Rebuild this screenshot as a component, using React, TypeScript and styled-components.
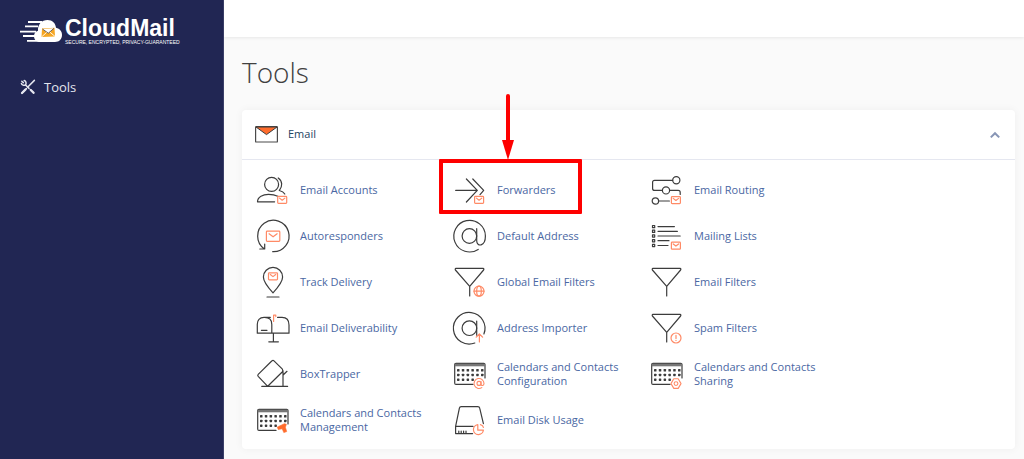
import React from "react";
import styled, { createGlobalStyle } from "styled-components";

const INK = "#3c3c3c";
const ORANGE = "#ff8a66";
const FLAME = "#ff6c2c";
const RED = "#fe0000";

const GlobalStyle = createGlobalStyle`
  * { box-sizing: border-box; }
  body {
    margin: 0;
    background: #fafafa;
    font-family: "Open Sans", "Noto Sans", sans-serif;
    font-size: 11px;
    line-height: 14px;
    color: #24435f;
  }
`;

const Page = styled.div`
  display: flex;
  min-height: 100vh;
`;

const Sidebar = styled.nav`
  flex: 0 0 224px;
  display: flex;
  flex-direction: column;
  gap: 32px;
  padding: 17px 20px;
  background: #212653;
  border-right: 1px solid #3b3f68;
`;

const Brand = styled.a`
  display: flex;
  align-items: center;
  gap: 2px;
  color: #ffffff;
  text-decoration: none;
`;

const BrandText = styled.span`
  display: flex;
  flex-direction: column;
  font-family: "Liberation Sans", Arial, sans-serif;
  white-space: nowrap;
`;

const BrandName = styled.span`
  font-size: 23px;
  line-height: 22px;
  font-weight: 700;
`;

const Tagline = styled.span`
  font-size: 5px;
  line-height: 6px;
`;

const NavLink = styled.a`
  display: flex;
  align-items: center;
  gap: 8px;
  color: #e4e5ee;
  font-size: 13px;
  line-height: 20px;
  font-weight: 500;
  text-decoration: none;
`;

const Main = styled.main`
  flex: 1;
  min-width: 0;
`;

const TopBar = styled.header`
  height: 37px;
  background: #ffffff;
  box-shadow: 0 1px 3px rgba(0, 0, 0, 0.08);
`;

const Content = styled.div`
  padding: 15px 9px 10px 18px;
`;

const Title = styled.h1`
  margin: 0 0 18px;
  font-size: 28px;
  line-height: 40px;
  font-weight: 300;
  color: #404040;
`;

const Card = styled.section`
  background: #ffffff;
  border-radius: 4px;
  box-shadow: 0 0 8px rgba(0, 0, 0, 0.05);
`;

const CardHeader = styled.div`
  display: flex;
  align-items: center;
  gap: 10px;
  height: 50px;
  padding: 0 14px 2px 13px;
  border-bottom: 1px solid #e5e7f0;
`;

const CardTitle = styled.h2`
  flex: 1;
  margin: 0;
  font-size: 11px;
  line-height: 14px;
  font-weight: 400;
`;

const Toggle = styled.button`
  display: flex;
  padding: 2px 0 0;
  border: 0;
  background: none;
`;

const ToolGrid = styled.div`
  display: grid;
  grid-template-columns: repeat(auto-fill, 197px);
  grid-auto-rows: 46px;
  padding: 7px 0 6px;
`;

const ToolLink = styled.a`
  position: relative;
  display: flex;
  align-items: center;
  gap: 11px;
  padding: 0 12px 0 15px;
  color: #4a67a3;
  text-decoration: none;
`;

const Glyph = styled.svg`
  flex: none;
  overflow: visible;
  fill: none;
  stroke: ${INK};
  stroke-width: 1.2;
  stroke-linecap: round;
  stroke-linejoin: round;
`;

const Highlight = styled.span`
  position: absolute;
  inset: -8px 54px -1px 0;
  border: 4px solid ${RED};
  border-radius: 1px;
`;

const Pointer = styled.svg`
  position: absolute;
  left: 63px;
  top: -73px;
`;

type MailProps = { x: number; y: number; w?: number; h?: number };

const Mail = ({ x, y, w = 9, h = 7 }: MailProps) => (
  <g stroke={ORANGE} strokeWidth={1.2}>
    <rect x={x} y={y} width={w} height={h} rx={0.8} />
    <path d={`M${x + w * 0.2} ${y + h * 0.25}L${x + w / 2} ${y + h * 0.55}L${x + w * 0.8} ${y + h * 0.25}`} />
  </g>
);

const Funnel = () => (
  <path d="M2 2.4H29Q30.4 2.6 29.6 4L15.7 20.3L1.4 4Q.8 2.6 2 2.4ZM15.7 20.3V30" />
);

const Calendar = () => (
  <>
    <path d="M19 26.4H2Q.7 26.4 .7 25V6.5Q.7 5.4 2 5.4H29.8Q31 5.4 31 6.5V20" />
    <path d="M.7 7H31" stroke="#777777" strokeWidth={2.6} strokeLinecap="butt" />
    <g fill={INK} stroke="none">
      {[11, 15.7, 20.4].map((y, row) =>
        [3, 7.8, 12.6, 17.4, 22.2, 27].map((x, col) =>
          row === 2 && col > 3 ? null : <rect key={`${x}-${y}`} x={x} y={y} width={2.5} height={2.5} rx={0.6} />
        )
      )}
    </g>
  </>
);

const icons: Record<string, React.ReactNode> = {
  accounts: (
    <>
      <circle cx={14.6} cy={10.4} r={7} />
      <path d="M17.6 27.8H.5C.6 22.6 6 20.4 11.5 20.4Q17 20.4 20.8 22.2M21.2 4C25.6 7 25.7 12.5 22.3 16.5C25 17.2 26.7 18.2 27.8 20" />
      <Mail x={20.7} y={22.4} />
    </>
  ),
  auto: (
    <>
      <path d="M15.7 31.7A15.7 15.7 0 1 0 7.4 28.9M2.8 29H7.7V24" />
      <Mail x={9.4} y={11.2} w={13.4} h={10.2} />
    </>
  ),
  track: (
    <>
      <path d="M16 26.8Q6.4 16.5 6.4 11A9.6 9.6 0 0 1 25.6 11Q25.6 16.5 16 26.8ZM10 31H22" />
      <Mail x={11.5} y={6.8} />
    </>
  ),
  mailbox: (
    <>
      <path d="M13.3 5.4H7C2.5 5.4 .3 8.2 .3 12.3V21.2H32V13C32 8 29.5 5.4 25 5.4H20.6M7.6 5.4C12.2 5.4 14.8 8 14.8 12.4V21.2M4.4 18.3H10M16.4 21.2V29.8M11.8 29.8H21.4" />
      <path d="M16.6 9.4V3.2H18.8V4.6" stroke={ORANGE} />
    </>
  ),
  box: (
    <path d="M15 2.8Q16 1.8 17 2.8L25.4 11.2Q26.3 12.8 25.2 14L10.7 28.3L1.2 18.4Q.3 17.4 1.2 16.4ZM4.8 28.4H30.6M26 12.5V28.4M26.4 16.8L30 13.3" />
  ),
  calManage: (
    <>
      <Calendar />
      <path d="M21.6 22.4L27.4 19.7L29.4 20.3L28.4 23.3L29.7 27.6L26.8 28.6L25.2 24.8L21.2 25.5L20.4 23.3Z" fill={FLAME} stroke={FLAME} strokeWidth={0.6} />
    </>
  ),
  forward: (
    <>
      <path d="M1.7 16.4H23.3M12.4 5L23.3 16.4L12.4 28M18.8 5L29.7 16.4L26 20.6" />
      <Mail x={20.6} y={22.4} />
    </>
  ),
  at: (
    <>
      <circle cx={15.4} cy={16} r={7.3} />
      <path d="M22.7 8.7V20.8C22.7 27 31.4 27 31.4 16A15.8 15.8 0 1 0 24.2 29.4" />
    </>
  ),
  atImport: (
    <>
      <circle cx={15.4} cy={16.2} r={7.3} />
      <path d="M22.7 9V23.2M29.9 22A15.8 15.8 0 1 0 20.8 31" />
      <path d="M25.4 30V22.2M22.2 25.2L25.4 22L28.6 25.2" stroke={ORANGE} />
    </>
  ),
  globalFilter: (
    <>
      <Funnel />
      <g stroke={ORANGE}>
        <circle cx={25} cy={25.2} r={5} />
        <ellipse cx={25} cy={25.2} rx={2.3} ry={5} />
        <path d="M20 25.2H30" />
      </g>
    </>
  ),
  filter: <Funnel />,
  spam: (
    <>
      <Funnel />
      <g stroke={ORANGE}>
        <circle cx={25} cy={26} r={5} />
        <path d="M25 23.4V26.4M25 28.3V28.5" />
      </g>
    </>
  ),
  calConfig: (
    <>
      <Calendar />
      <g stroke={ORANGE} strokeWidth={1.1}>
        <circle cx={25} cy={25.4} r={2} />
        <path d="M27 23.4V26.4C27.2 28.3 30 27.6 30 25.4A5 5 0 1 0 27.8 29.6" />
      </g>
    </>
  ),
  calShare: (
    <>
      <Calendar />
      <g stroke={ORANGE} strokeWidth={1.1}>
        <path d="M22.8 20.8H27.2L30 25.6L27.2 30.4H22.8L20 25.6Z" />
        <circle cx={25} cy={25.6} r={1.9} />
      </g>
    </>
  ),
  disk: (
    <>
      <path d="M18.6 29.6H1.6V22.4L5.4 4.2Q5.7 2.6 7.2 2.6H23.8Q25.4 2.6 25.7 4.2L29.4 19.6M1.6 22.4H19" />
      <path d="M4.8 27V29M7.2 27V29M9.6 27V29M12 27V29" />
      <path d="M23.8 20.6A5 5 0 1 0 29.4 26.2H23.8ZM26.4 20.6Q29 21.2 29.4 23.4" stroke={ORANGE} />
    </>
  ),
  routing: (
    <>
      <circle cx={25.3} cy={6.3} r={3.6} />
      <circle cx={15} cy={16.4} r={3.6} />
      <circle cx={4.4} cy={27} r={3.2} />
      <path d="M21.7 6.3H3.6Q1.6 6.3 1.6 8.3V14.4Q1.6 16.4 3.6 16.4H11.4M18.6 16.4H27.2Q29.2 16.4 29.2 18.4V20.4M7.6 27H18.4" />
      <Mail x={20.4} y={22.6} />
    </>
  ),
  lists: (
    <>
      {[6.6, 11.3, 16, 20.7, 25.5].map((y, i) => (
        <g key={y}>
          <rect x={1.5} y={y - 1.1} width={2.2} height={2.2} />
          <path d={`M7 ${y}H${[23.4, 26.4, 29.2, 18, 17][i]}`} />
        </g>
      ))}
      <Mail x={20.4} y={22.2} />
    </>
  ),
};

type Tool = { label: string; icon: string; highlighted?: boolean };

const tools: Tool[] = [
  { label: "Email Accounts", icon: "accounts" },
  { label: "Forwarders", icon: "forward", highlighted: true },
  { label: "Email Routing", icon: "routing" },
  { label: "Autoresponders", icon: "auto" },
  { label: "Default Address", icon: "at" },
  { label: "Mailing Lists", icon: "lists" },
  { label: "Track Delivery", icon: "track" },
  { label: "Global Email Filters", icon: "globalFilter" },
  { label: "Email Filters", icon: "filter" },
  { label: "Email Deliverability", icon: "mailbox" },
  { label: "Address Importer", icon: "atImport" },
  { label: "Spam Filters", icon: "spam" },
  { label: "BoxTrapper", icon: "box" },
  { label: "Calendars and Contacts Configuration", icon: "calConfig" },
  { label: "Calendars and Contacts Sharing", icon: "calShare" },
  { label: "Calendars and Contacts Management", icon: "calManage" },
  { label: "Email Disk Usage", icon: "disk" },
];

const CloudLogo = () => (
  <svg width="43" height="24" viewBox="0 0 43 24" aria-hidden="true">
    <g stroke="#ffffff" strokeWidth="1.8">
      <path d="M8 3H22M5 7.4H18M0 12.6H16M3 17H16M7 21.8H20" />
    </g>
    <path d="M20.5 23C15.8 23 14 20 14 17.2C14 14.4 15.6 12.3 18 11.8C17.6 5.6 21.6 1 27.5 1C32.4 1 35.6 4.3 36 8.8C40 9.6 42 12.6 42 16C42 20.2 39.2 23 35 23Z" fill="#ffffff" />
    <path d="M22 9.5L34.5 8.8L35 17.4L21.5 18Z" fill="#f5a623" />
    <path d="M22.5 10L28.3 14.2L34 9.3" fill="#ffffff" stroke="#454658" strokeWidth=".8" />
    <path d="M21.5 18L26.6 13.4M35 17.4L30 13.2" stroke="#ffffff" strokeWidth=".9" />
  </svg>
);

const WrenchIcon = () => (
  <svg width="16" height="16" viewBox="0 0 16 16" fill="none" stroke="#e4e5ee" strokeWidth="1.5" strokeLinecap="round" aria-hidden="true">
    <path d="M5.6 6L9 9.4M10.4 10.8L13.6 14" />
    <path d="M4.2 1.6C6 2 6.6 4.2 5.6 5.8C4 6.8 1.8 6.2 1.4 4.4M3.4 3.6L1.8 2.2" />
    <path d="M14.4 1.4L7.8 8M6.4 9.6L2 14" />
    <path d="M5.4 10.6L2 14" strokeWidth="2.2" />
    <path d="M10.8 11L13.6 13.8" strokeWidth="2.2" />
  </svg>
);

const EmailIcon = () => (
  <svg width="23" height="18" viewBox="0 0 23 18" aria-hidden="true">
    <rect x=".6" y="1.6" width="21.8" height="15.4" rx=".6" fill="#ffffff" stroke="#4a4a4a" strokeWidth="1.2" />
    <path d="M1 2L11.5 9.6L22 2Z" fill={FLAME} stroke={INK} />
  </svg>
);

const ChevronUp = () => (
  <svg width="12" height="12" viewBox="0 0 12 12" fill="none" stroke="#8795b5" strokeWidth="2" aria-hidden="true">
    <path d="M1.8 8.4L6 4.2L10.2 8.4" />
  </svg>
);

const Callout = () => (
  <>
    <Highlight />
    <Pointer width="12" height="66" viewBox="0 0 12 66" aria-hidden="true">
      <path d="M6 2V48" stroke={RED} strokeWidth="4" strokeLinecap="round" />
      <path d="M0 46H12L6 66Z" fill={RED} />
    </Pointer>
  </>
);

export default function App() {
  return (
    <Page>
      <GlobalStyle />
      <Sidebar>
        <Brand href="#home">
          <CloudLogo />
          <BrandText>
            <BrandName>CloudMail</BrandName>
            <Tagline>SECURE, ENCRYPTED, PRIVACY-GUARANTEED</Tagline>
          </BrandText>
        </Brand>
        <NavLink href="#tools">
          <WrenchIcon />
          Tools
        </NavLink>
      </Sidebar>
      <Main>
        <TopBar />
        <Content>
          <Title>Tools</Title>
          <Card>
            <CardHeader>
              <EmailIcon />
              <CardTitle>Email</CardTitle>
              <Toggle type="button" aria-label="Collapse Email" aria-expanded="true">
                <ChevronUp />
              </Toggle>
            </CardHeader>
            <ToolGrid>
              {tools.map((tool) => (
                <ToolLink key={tool.label} href={`#${tool.icon}`}>
                  <Glyph width="32" height="32" viewBox="0 0 32 32" aria-hidden="true">
                    {icons[tool.icon]}
                  </Glyph>
                  <span>{tool.label}</span>
                  {tool.highlighted && <Callout />}
                </ToolLink>
              ))}
            </ToolGrid>
          </Card>
        </Content>
      </Main>
    </Page>
  );
}
